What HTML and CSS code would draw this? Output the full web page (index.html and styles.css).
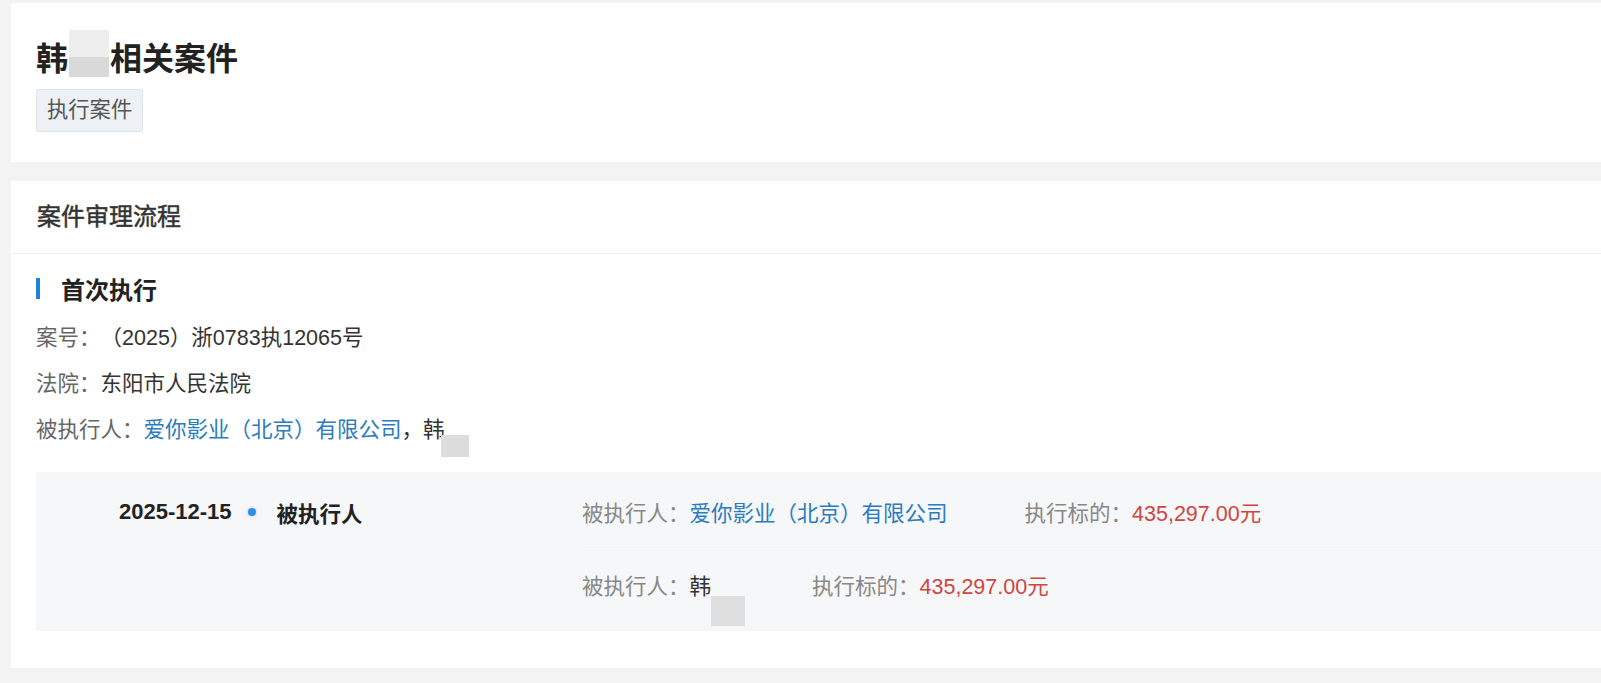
FILE: index.html
```html
<!DOCTYPE html>
<html lang="zh-CN">
<head>
<meta charset="utf-8">
<title>韩相关案件</title>
<link rel="stylesheet" href="styles.css">
</head>
<body>
<div class="page">
  <section class="card card-top">
    <h1 class="title"><span>韩</span><span class="mosaic" aria-hidden="true"></span><span>相关案件</span></h1>
    <div class="tag-row"><span class="tag">执行案件</span></div>
  </section>

  <section class="card card-flow">
    <div class="card-head">案件审理流程</div>
    <div class="card-body">
      <div class="sec-title"><span class="bar"></span><span>首次执行</span></div>
      <div class="info">
        <div class="info-row"><span class="lbl">案号：</span><span class="val">（2025）浙0783执12065号</span></div>
        <div class="info-row"><span class="lbl">法院：</span><span class="val">东阳市人民法院</span></div>
        <div class="info-row"><span class="lbl">被执行人：</span><span class="link">爱你影业（北京）有限公司</span><span class="val">，韩</span><span class="redact redact-a"></span></div>
      </div>
      <div class="timeline">
        <div class="tl-left">
          <span class="tl-date">2025-12-15</span>
          <span class="tl-dot"></span>
          <span class="tl-title">被执行人</span>
        </div>
        <div class="tl-right">
          <div class="tl-row tl-row-first">
            <span class="item"><span class="g">被执行人：</span><span class="link">爱你影业（北京）有限公司</span></span>
            <span class="item item-amt"><span class="g">执行标的：</span><span class="amt">435,297.00元</span></span>
          </div>
          <div class="tl-row">
            <span class="item"><span class="g">被执行人：</span><span class="val">韩</span><span class="redact redact-b"></span></span>
            <span class="item item-amt"><span class="g">执行标的：</span><span class="amt">435,297.00元</span></span>
          </div>
        </div>
      </div>
    </div>
  </section>
</div>
</body>
</html>
```
FILE: styles.css
```css
* { box-sizing: border-box; }
html, body { margin: 0; padding: 0; }
body {
  background: #f3f3f4;
  font-family: "Liberation Sans", "Noto Sans CJK SC", sans-serif;
  color: #333;
  overflow: hidden;
  text-spacing-trim: space-all;
}
.page { padding: 3px 0 0 11px; }
.card { background: #fff; }

.card-top { padding: 27px 0 30px 25px; }
.title {
  display: flex;
  align-items: flex-end;
  margin: 0;
  font-size: 32px;
  line-height: 40px;
  font-weight: 700;
  color: #222;
}
.mosaic {
  width: 40px;
  height: 47px;
  margin: 0 1px 2px 1px;
  background: linear-gradient(#eeeeee 0, #ededed 57%, #d9d9d9 57%, #d9d9d9 100%);
}
.tag-row { margin-top: 10px; }
.tag {
  display: inline-block;
  font-size: 21.3px;
  line-height: 29px;
  padding: 6px 10px;
  background: #edf1f5;
  border: 1px solid #dde3ea;
  border-radius: 2px;
  color: #555;
}

.card-flow { margin-top: 19px; padding-bottom: 37px; }
.card-head {
  height: 73px;
  line-height: 72px;
  padding-left: 26px;
  font-size: 24px;
  font-weight: 400;
  -webkit-text-stroke: 0.5px #333;
  color: #333;
  border-bottom: 1px solid #efefef;
}
.card-body { padding: 18px 0 0 25px; }
.sec-title {
  display: flex;
  align-items: center;
  height: 32px;
  font-size: 24px;
  font-weight: 700;
  color: #222;
}
.bar {
  width: 4px;
  height: 21px;
  background: #1f80e0;
  margin-right: 21px;
}
.info { margin-top: 11px; font-size: 21.5px; }
.info-row { line-height: 46px; white-space: nowrap; }
.lbl { color: #666; }
.val { color: #333; }
.link { color: #2a7bbf; }

.redact {
  position: relative;
  display: inline-block;
  height: 20px;
  vertical-align: -4px;
}
.redact::after {
  content: "";
  position: absolute;
  left: 0;
  background: #dcdcdc;
}
.redact-a { width: 24px; }
.redact-a::after { top: 14px; left: -4px; width: 28px; height: 22px; }
.redact-b { width: 24px; }
.redact-b::after { top: 18px; width: 34px; height: 30px; background: #dedede; }

.timeline {
  margin-top: 19px;
  display: flex;
  background: #f6f7f9;
  padding: 4px 0 11px 0;
  font-size: 21.5px;
}
.tl-left {
  width: 546px;
  flex: none;
  height: 72px;
  padding-left: 83px;
  display: flex;
  align-items: center;
}
.tl-date {
  font-size: 22px;
  font-weight: 700;
  color: #222;
}
.tl-dot {
  width: 8px;
  height: 8px;
  border-radius: 50%;
  background: #2d8ee6;
  box-shadow: 0 0 3px rgba(45,142,230,0.35);
  margin-left: 16px;
}
.tl-title {
  margin-left: 21px;
  font-weight: 700;
  color: #222;
}
.tl-right { flex: 1; display: flex; flex-direction: column; }
.tl-row {
  height: 72px;
  display: flex;
  align-items: center;
  white-space: nowrap;
}
.tl-row-first { border-bottom: 1px solid #f1f2f4; }
.g { color: #888; }
.item-amt { margin-left: 77px; }
.amt { color: #d0453f; }
```
